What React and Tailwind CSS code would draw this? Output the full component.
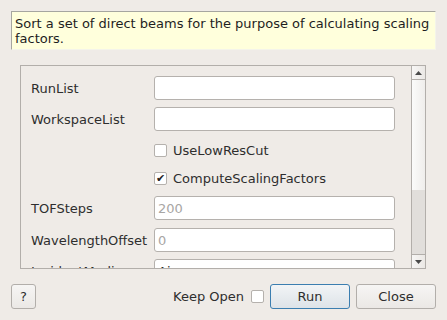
import React from 'react';

const font = { fontFamily: '"DejaVu Sans", "Liberation Sans", sans-serif' };

function TextField({ value = '', muted = false }) {
    return (
        <div className="w-[241px] h-[24px] shrink-0 bg-white border border-[#b5b1ad] rounded-[3px] flex items-center px-[3px]">
            <span className={muted ? 'text-[#a8a6a4]' : 'text-[#2e2e2e]'}>{value}</span>
        </div>
    );
}

function CheckBox({ checked = false }) {
    return (
        <div className="w-[13px] h-[13px] shrink-0 bg-white border border-[#b5b1ad] rounded-[2px] flex items-center justify-center text-[11px] leading-none text-[#222]">
            {checked ? '✔' : ''}
        </div>
    );
}

function FieldRow({ label, children, className = '' }) {
    return (
        <div className={`flex items-center h-[24px] shrink-0 ${className}`}>
            <div className="w-[133px] pl-[10px] shrink-0 whitespace-nowrap">{label}</div>
            {children}
        </div>
    );
}

function CheckRow({ label, checked, className = '' }) {
    return (
        <div className={`flex items-center h-[14px] shrink-0 ${className}`}>
            <div className="w-[133px] shrink-0" />
            <CheckBox checked={checked} />
            <span className="ml-[6px] whitespace-nowrap">{label}</span>
        </div>
    );
}

export default function App() {
    return (
        <div
            className="w-[447px] h-[320px] bg-[#efebe7] text-[13px] leading-[15px] text-[#2e2e2e] flex flex-col pt-[11px] overflow-hidden"
            style={font}
        >
            {/* Description */}
            <div className="mx-[11px] h-[39px] bg-[#ffffdc] border-t border-l border-[#a6a6a0] border-r-[#f4f4ea] border-b-[#f4f4ea] border-r border-b pl-[3px] pt-[4px] text-[#1e1e1e]">
                Sort a set of direct beams for the purpose of calculating scaling factors.
            </div>

            {/* Property list */}
            <div className="ml-[20px] mr-[21px] mt-[15px] h-[204px] border border-[#b2aeaa] flex">
                <div className="flex-1 overflow-hidden flex flex-col pt-[10px]">
                    <FieldRow label="RunList">
                        <TextField />
                    </FieldRow>
                    <FieldRow label="WorkspaceList" className="mt-[7px]">
                        <TextField />
                    </FieldRow>
                    <CheckRow label="UseLowResCut" className="mt-[12px]" />
                    <CheckRow label="ComputeScalingFactors" checked className="mt-[14px]" />
                    <FieldRow label="TOFSteps" className="mt-[11px]">
                        <TextField value="200" muted />
                    </FieldRow>
                    <FieldRow label="WavelengthOffset" className="mt-[8px]">
                        <TextField value="0" muted />
                    </FieldRow>
                    <FieldRow label="IncidentMedium" className="mt-[7px]">
                        <TextField value="Air" />
                    </FieldRow>
                </div>

                {/* Scrollbar */}
                <div className="w-[14px] shrink-0 border-l border-[#b2aeaa] flex flex-col">
                    <div className="h-[14px] border-b border-[#b2aeaa] bg-gradient-to-r from-[#f7f6f5] to-[#ebe8e5] flex items-center justify-center">
                        <svg width="7" height="4" viewBox="0 0 7 4">
                            <path d="M0 4 L3.5 0 L7 4 Z" fill="#4a4a4a" />
                        </svg>
                    </div>
                    <div className="h-[110px] bg-gradient-to-r from-[#fbfbfa] to-[#efedeb]" />
                    <div className="flex-1 bg-[#e1dedb]" />
                    <div className="h-[14px] border-t border-[#b2aeaa] bg-gradient-to-r from-[#f7f6f5] to-[#ebe8e5] flex items-center justify-center">
                        <svg width="7" height="4" viewBox="0 0 7 4">
                            <path d="M0 0 L7 0 L3.5 4 Z" fill="#4a4a4a" />
                        </svg>
                    </div>
                </div>
            </div>

            {/* Buttons */}
            <div className="flex items-center mt-[15px] px-[11px]">
                <button className="w-[25px] h-[25px] border border-[#b2aeaa] rounded-[3px] bg-gradient-to-b from-[#f6f5f4] to-[#ebe8e5]">
                    ?
                </button>
                <div className="flex-1" />
                <span className="mr-[7px] whitespace-nowrap">Keep Open</span>
                <CheckBox />
                <button className="ml-[6px] w-[80px] h-[25px] border border-[#3b7eb0] rounded-[3px] bg-gradient-to-b from-[#f2f4f6] to-[#dde3e8]">
                    Run
                </button>
                <button className="ml-[6px] w-[80px] h-[25px] border border-[#b2aeaa] rounded-[3px] bg-gradient-to-b from-[#f6f5f4] to-[#ebe8e5]">
                    Close
                </button>
            </div>
        </div>
    );
}
